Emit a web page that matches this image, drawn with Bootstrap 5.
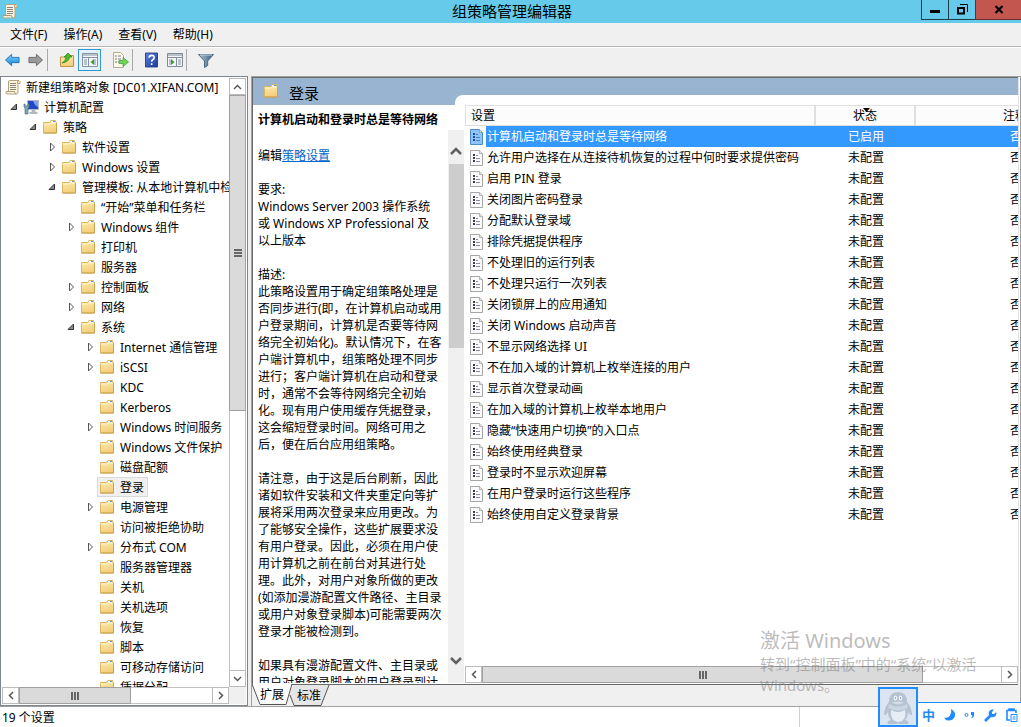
<!DOCTYPE html>
<html lang="zh-CN">
<head>
<meta charset="utf-8">
<meta name="viewport" content="width=device-width, initial-scale=1">
<title>组策略管理编辑器</title>
<link href="https://cdn.jsdelivr.net/npm/bootstrap@5.3.0/dist/css/bootstrap.min.css" rel="stylesheet">
<style>
  :root { --face: #f0f0f0; --edge: #a6a6a6; --sky: #66cbea; --band: #99b4d1; --ime: #1e8cff; }
  body { font: 12px/17px "Noto Sans", "Noto Sans CJK SC", sans-serif; color: #000; background: var(--face); }
  button { font: inherit; color: inherit; border: 0; background: none; padding: 0; }
  svg { display: block; flex: none; }

  .titlebar { height: 23px; background: var(--sky); }
  .titlebar h1 { font-size: 15px; line-height: 23px; padding-left: 3px; }
  .titlebar .app-icon { left: 2px; top: 3px; }
  .caption-btns { top: 0; right: 0; height: 20px; }
  .caption-btns button { width: 27px; height: 20px; border: 1px solid #1f3d47; border-top: 0; border-right: 0; display: grid; place-items: center; }
  .caption-btns .close-win { width: 46px; background: #c3564f; border-color: #6b2f2b; }

  .menubar { height: 24px; border-bottom: 1px solid #b5b5b5; padding-left: 10px; gap: 16px; }
  .toolbar { height: 29px; border-top: 1px solid #fff; padding-left: 1px; }
  .toolbar button { width: 23px; height: 22px; display: grid; place-items: center; }
  .toolbar .on { border: 1px solid #3097d6; background: #e4f1fa; }
  .toolbar .sep { width: 1px; height: 22px; background: #a9a9a9; margin-right: 7px; }

  .tree-pane { width: 248px; border: 1px solid #7f858f; background: #fff; padding: 1px 1px 1px 0; }
  #tree { margin-top: -1px; }
  .tree-foot { padding-left: 1px; }
  .sb-corner { width: 17px; background: var(--face); }
  .tree-row { height: 20px; white-space: nowrap; }
  .tree-row .twist { width: 14px; height: 20px; display: grid; place-items: center; }
  .tree-row .node { height: 20px; gap: 5px; padding: 0 3px 0 1px; border: 1px solid transparent; }
  .tree-row .node.sel { background: #f0f0f0; border-color: #d9d9d9; }

  .sb-v { width: 17px; background: #fff; border: 1px solid #c3c3c3; border-width: 0 1px; }
  .sb-h { height: 17px; background: #fff; border: 1px solid #c3c3c3; border-width: 1px 0; }
  .sb-btn { border: 1px solid #bcbcbc !important; display: grid; place-items: center; flex: none; }
  .sb-v .sb-btn { height: 17px; width: 17px; margin: 0 -1px; }
  .sb-h .sb-btn { width: 17px; height: 17px; margin: -1px 0; }
  .thumb { background: #dadada; border: 1px solid #a0a0a0; display: grid; place-items: center; }
  .sb-v .thumb { margin: 0 -1px; }
  .sb-h .thumb { margin: -1px 0; }
  .tree-v .thumb { height: 55%; }
  .tree-h .thumb { width: 58%; }
  .list-h .thumb { width: 85%; }

  .result-pane { margin-left: 3px; border: 1px solid #a0a0a0; border-bottom: 0; }
  .result-inner { border: 1px solid #696969; border-width: 1px 0 1px 1px; padding-bottom: 1px; background: #fff; }
  .frame-gap { width: 2px; border-left: 1px solid #e3e3e3; background: #fff; }
  .band { height: 27px; background: var(--band); padding: 0 0 2px 10px; gap: 10px; font-size: 15px; }
  .band h2 { font-size: 15px; line-height: 17px; margin: 5px 0 0; }
  .result-body, .list-pane { min-width: 0; min-height: 0; }
  .desc { width: 211px; }
  .desc h3 { font-size: 12px; line-height: 17px; height: 25px; padding: 6px 0 0 5px; font-weight: 700; white-space: nowrap; }
  .desc-text { padding: 17px 0 0 5px; white-space: nowrap; }
  .desc-text p { margin: 0 0 17px; }
  .desc-text a { color: #0066cc; }
  .desc-sb { width: 16px; background: var(--face); padding-left: 1px; }
  .desc-sb button { height: 34px; padding: 8px 0 0 1px; }
  .desc-sb .sb-end { padding: 0 0 10px 1px; }
  .desc-sb .bar { background: #cdcdcd; height: 38%; }

  .list-pane { margin-top: -10px; background: #fff; padding: 10px 0 0 1px; }
  .list-pane::before { content: ""; position: absolute; left: -9px; top: 0; width: 9px; height: 10px; background: #fff; border-top-left-radius: 8px; }
  .policies { table-layout: fixed; width: 651px; border-collapse: separate; border-spacing: 0; }
  .policies .c-ico { width: 21px; }
  .policies .c-name { width: 330px; }
  .policies .c-state { width: 100px; }
  .policies .c-note { width: 200px; }
  .policies th, .policies td { padding: 0; height: 21px; line-height: 19px; font-weight: 400; white-space: nowrap; text-align: center; }
  .policies th { background: #fcfcfc; border: 1px solid #e0e0e0; border-left: 0; border-right-width: 2px; position: relative; }
  .policies th:first-child { text-align: left; padding-left: 5px; border-left: 1px solid #e0e0e0; }
  .policies td.ico { padding-left: 5px; }
  .policies td.nm { text-align: left; padding-left: 1px; }
  .policies .sel td:not(.ico) { background: #3399ff; color: #fff; }
  .sort { left: 47px; top: 2px; }

  .tabs { height: 21px; }
  .tabs button { position: relative; height: 21px; }
  .tabs button svg { position: absolute; left: 0; top: 0; }
  .tabs button span { position: relative; }
  .tabs .t1 { width: 38px; padding-left: 2px; z-index: 1; margin-top: -1px; }
  .tabs .t2 { width: 40px; margin-left: -1px; }

  .status { height: 21px; border-top: 1px solid #a0a0a0; background: #fff; padding-left: 2px; }
  .status .part { width: 222px; border-left: 1px solid #d0d0d0; height: 20px; }

  .watermark { right: 36px; bottom: 31px; width: 225px; color: rgba(120,120,120,.5); font-size: 15px; line-height: 21px; pointer-events: none; }
  .watermark strong { font-size: 20px; line-height: 26px; font-weight: 400; display: block; }
  .ime { right: 0; bottom: 0; }
  .ime .penguin { width: 40px; height: 40px; border: 2px solid var(--ime); background: #dbe4f0; display: grid; place-items: center; }
  .ime .keys { width: 103px; height: 25px; border-top: 1px solid var(--ime); background: #fff; color: var(--ime); padding: 0 3px 0 4px; font-size: 13px; font-weight: 700; }
</style>
</head>
<body class="vh-100 overflow-hidden d-flex flex-column position-relative">

<svg width="0" height="0" class="position-absolute" aria-hidden="true">
  <defs>
    <linearGradient id="gold" x2="0.3" y2="1"><stop offset="0" stop-color="#ffeeb0"/><stop offset="1" stop-color="#f3cf7c"/></linearGradient>
    <linearGradient id="blueArrow" x2="0" y2="1"><stop offset="0" stop-color="#7fd3fb"/><stop offset="1" stop-color="#1385d8"/></linearGradient>
    <linearGradient id="help" x2="1" y2="1"><stop offset="0" stop-color="#5d84e0"/><stop offset="1" stop-color="#1b3796"/></linearGradient>
    <linearGradient id="steel" x2="1" y2="0"><stop offset="0" stop-color="#a9c2d4"/><stop offset=".5" stop-color="#7392ab"/><stop offset="1" stop-color="#3e566c"/></linearGradient>
    <symbol id="folder" viewBox="0 0 16 16">
      <path d="M1.500 3.500h6.500l1-2h4.500v2h1v10.500h-13z" fill="url(#gold)" stroke="#d9b463"/>
      <path d="M9 2h4v2H9z" fill="#fff"/><path d="M11 2h2v1h-2z" fill="#4d9be0"/>
      <path d="M1.500 5h6.500l1-1h5" fill="none" stroke="#fff3c9"/><path d="M1.500 14h13V4.500" fill="none" stroke="#c9a04c"/>
    </symbol>
    <symbol id="scroll" viewBox="0 0 16 16">
      <path d="M4.500 1.500h9.500q1.500.5 1 3h-2v8.500q0 2-2 2H2q-1.500-.5-1-2.500h2.500V3q0-1.500 1-1.500z" fill="#f9f3df" stroke="#b5a27a"/>
      <path d="M12.500 4.500V3q.5-1.500 1.500-1.500M1 12.500h8.500q0 2 1.500 2.500" fill="none" stroke="#b09c72"/>
      <path d="M5 4.500h6M5 6.500h6M5 8.500h6M5 10.500h6" stroke="#8d8778"/>
    </symbol>
    <symbol id="computer" viewBox="0 0 16 16">
      <path d="M4.500 1.500h11v9h-11z" fill="#2448c4" stroke="#b5bac5"/><path d="M10 2h5v6q-3-1-5-6z" fill="#78a4f3"/>
      <path d="M8.500 11h4v2h2v2h-8v-2h2z" fill="#b4b8be"/>
      <path d="M1 5v3l1 1v6h3V9l1-1V5H5v2H2V5z" fill="#7fa5b7" stroke="#4c7488" stroke-width=".7"/>
    </symbol>
    <symbol id="closed" viewBox="0 0 7 10"><path d="M1.500 1v8L5.500 5z" fill="#fff" stroke="#555"/></symbol>
    <symbol id="open" viewBox="0 0 8 8"><path d="M6.500 1v5.500H1z" fill="#888" stroke="#333"/></symbol>
    <symbol id="setting" viewBox="0 0 13 16">
      <path d="M.5.5h9l3 3v12H.5z" fill="#fafafa" stroke="#a6a6a6"/><path d="M9.500.5v3h3" fill="#e6e6e6" stroke="#b4b4b4"/>
      <path d="M3 4h2v2H3zM3 7h2v2H3zM3 10h2v2H3z" fill="#3c3c4c"/><path d="M6 5.500h2M6 8.500h4M6 11.500h4" stroke="#8c8ca2"/>
    </symbol>
    <symbol id="setting-sel" viewBox="0 0 13 16">
      <path d="M.5.5h9l3 3v12H.5z" fill="#8cc4fb" stroke="#4f8cc9"/><path d="M9.500.5v3h3" fill="#c9e8b0" stroke="#79a9c5"/>
      <path d="M3 4h2v2H3zM3 7h2v2H3zM3 10h2v2H3z" fill="#224d80"/><path d="M6 5.500h2M6 8.500h4M6 11.500h4" stroke="#437fc2"/>
    </symbol>
    <symbol id="up" viewBox="0 0 9 6"><path d="M1 5l3.500-3.500L8 5" fill="none" stroke="#555" stroke-width="1.400"/></symbol>
    <symbol id="down" viewBox="0 0 9 6"><path d="M1 1l3.500 3.500L8 1" fill="none" stroke="#555" stroke-width="1.400"/></symbol>
    <symbol id="left" viewBox="0 0 6 9"><path d="M5 1L1.500 4.500 5 8" fill="none" stroke="#555" stroke-width="1.500"/></symbol>
    <symbol id="right" viewBox="0 0 6 9"><path d="M1 1l3.500 3.500L1 8" fill="none" stroke="#555" stroke-width="1.500"/></symbol>
    <symbol id="grip" viewBox="0 0 8 8"><path d="M0 0h2v8H0zM3 0h2v8H3zM6 0h2v8H6z" fill="#666"/></symbol>
    <symbol id="grip-v" viewBox="0 0 8 8"><path d="M0 0v2h8V0zM0 3v2h8V3zM0 6v2h8V6z" fill="#666"/></symbol>
  </defs>
</svg>

<header class="titlebar position-relative flex-shrink-0">
  <svg class="app-icon position-absolute" width="16" height="16"><use href="#scroll"/></svg>
  <h1 class="text-center fw-normal m-0">组策略管理编辑器</h1>
  <div class="caption-btns position-absolute d-flex">
    <button type="button" aria-label="最小化"><svg width="10" height="10"><path d="M0 5h10v3H0z"/></svg></button>
    <button type="button" aria-label="还原"><svg width="11" height="11"><path d="M3 .5h7.500V8" fill="none" stroke="#000"/><path d="M1 4h6v5.500H1z" fill="none" stroke="#000" stroke-width="2"/></svg></button>
    <button type="button" class="close-win" aria-label="关闭"><svg width="10" height="9"><path d="M1.500 1l7 7M8.500 1l-7 7" stroke="#000" stroke-width="2.200"/></svg></button>
  </div>
</header>

<nav class="menubar d-flex align-items-center flex-shrink-0" aria-label="菜单">
  <button type="button">文件(F)</button>
  <button type="button">操作(A)</button>
  <button type="button">查看(V)</button>
  <button type="button">帮助(H)</button>
</nav>

<div class="toolbar d-flex align-items-center flex-shrink-0 pb-1" role="toolbar">
  <button type="button" aria-label="后退"><svg width="17" height="14" viewBox="0 0 18 16"><path d="M1 8l7-6.500V5h8.500v6H8v3.500z" fill="url(#blueArrow)" stroke="#1b6fae"/></svg></button>
  <button type="button" aria-label="前进"><svg width="17" height="14" viewBox="0 0 18 16"><path d="M17 8l-7-6.500V5H1.500v6H10v3.500z" fill="#9b9b9b" stroke="#626262"/></svg></button>
  <span class="sep"></span>
  <button type="button" aria-label="向上一级"><svg width="16" height="16" viewBox="0 0 16 16"><path d="M1.500 5h5l1-1.500h7v11h-13z" fill="url(#gold)" stroke="#bf943e"/><path d="M3 11q4-2 4-6H5l4-4 4 4h-2.500Q10 10 3 11z" fill="#48bd2c" stroke="#23801a" stroke-width=".7"/></svg></button>
  <button type="button" class="on" aria-label="显示/隐藏控制台树"><svg width="16" height="14" viewBox="0 0 16 14"><path d="M.5.5h15v13H.5z" fill="#f4f6f9" stroke="#8290a3"/><path d="M1 2h14M.5 4.500h15M6.500 5v8" stroke="#8290a3"/><path d="M2 7h3M2 9h3M2 11h3M13 6v6" stroke="#798da8"/><path d="M12 6v6L8.500 9z" fill="#32a12b"/></svg></button>
  <button type="button" class="ms-2" aria-label="导出列表"><svg width="17" height="16" viewBox="0 0 17 16"><path d="M1.500.5h7l3 3v12h-10z" fill="#fdf9e9" stroke="#b5ae94"/><path d="M3 4h2M3 7h2M3 10h2M6 4h3M6 7h3M6 10h3" stroke="#747b90"/><path d="M7 8.500h4V5.500L16.500 10 11 14.500v-3H7z" fill="#6fd653" stroke="#3a9e30" stroke-width=".7"/></svg></button>
  <span class="sep"></span>
  <button type="button" aria-label="帮助"><svg width="13" height="16" viewBox="0 0 14 16"><path d="M.5.500h13v15H.5z" fill="url(#help)" stroke="#20398a"/><path d="M4.500 5.500Q4.500 3 7.200 3t2.600 2.500Q9.800 7 8 8q-.8.500-.8 2M7.200 11.500v2" fill="none" stroke="#fff" stroke-width="1.700"/></svg></button>
  <button type="button" aria-label="显示/隐藏操作窗格"><svg width="16" height="14" viewBox="0 0 16 14"><path d="M.5.5h15v13H.5z" fill="#f4f6f9" stroke="#808a98"/><path d="M1 2h14M.5 4.500h15M9.500 5v8" stroke="#808a98"/><path d="M11 7h3M11 9h3M11 11h3M3 6v6" stroke="#8792a0"/><path d="M4 6v6l3.500-3z" fill="#32a12b"/></svg></button>
  <span class="sep"></span>
  <button type="button" aria-label="筛选器"><svg width="16" height="15" viewBox="0 0 16 15"><path d="M.5 1.500h15L9.700 8v4.500L6.500 14.500V8z" fill="url(#steel)" stroke="#4f697e"/><path d="M2 2h12" stroke="#c5d6e2"/></svg></button>
</div>

<main class="d-flex flex-grow-1 overflow-hidden">
  <section class="tree-pane d-flex flex-column flex-shrink-0" aria-label="控制台树">
    <div class="d-flex flex-grow-1 overflow-hidden">
      <div id="tree" class="flex-grow-1 overflow-hidden" role="tree"></div>
      <div class="sb-v tree-v d-flex flex-column flex-shrink-0">
        <button type="button" class="sb-btn" aria-label="向上滚动"><svg width="9" height="6"><use href="#up"/></svg></button>
        <div class="flex-grow-1"><div class="thumb"><svg width="8" height="8"><use href="#grip-v"/></svg></div></div>
        <button type="button" class="sb-btn" aria-label="向下滚动"><svg width="9" height="6"><use href="#down"/></svg></button>
      </div>
    </div>
    <div class="tree-foot d-flex flex-shrink-0">
      <div class="sb-h tree-h d-flex flex-grow-1">
        <button type="button" class="sb-btn" aria-label="向左滚动"><svg width="6" height="9"><use href="#left"/></svg></button>
        <div class="flex-grow-1 d-flex"><div class="thumb"><svg width="8" height="8"><use href="#grip"/></svg></div></div>
        <button type="button" class="sb-btn" aria-label="向右滚动"><svg width="6" height="9"><use href="#right"/></svg></button>
      </div>
      <div class="sb-corner"></div>
    </div>
  </section>

  <section class="result-pane d-flex flex-column flex-grow-1 overflow-hidden">
    <div class="d-flex flex-grow-1 overflow-hidden">
      <div class="result-inner d-flex flex-column flex-grow-1 overflow-hidden">
        <div class="band d-flex align-items-center flex-shrink-0">
          <svg width="16" height="16"><use href="#folder"/></svg><h2 class="fw-normal">登录</h2>
        </div>
        <div class="result-body d-flex flex-grow-1">
          <div class="desc d-flex flex-column flex-shrink-0">
            <h3 class="m-0 flex-shrink-0">计算机启动和登录时总是等待网络</h3>
            <div class="d-flex flex-grow-1 overflow-hidden">
              <div class="desc-text flex-grow-1 overflow-hidden">
                <p>编辑<a href="#">策略设置</a></p>
                <p>要求:<br>Windows Server 2003 操作系统<br>或 Windows XP Professional 及<br>以上版本</p>
                <p>描述:<br>此策略设置用于确定组策略处理是<br>否同步进行(即，在计算机启动或用<br>户登录期间，计算机是否要等待网<br>络完全初始化)。默认情况下，在客<br>户端计算机中，组策略处理不同步<br>进行；客户端计算机在启动和登录<br>时，通常不会等待网络完全初始<br>化。现有用户使用缓存凭据登录，<br>这会缩短登录时间。网络可用之<br>后，便在后台应用组策略。</p>
                <p>请注意，由于这是后台刷新，因此<br>诸如软件安装和文件夹重定向等扩<br>展将采用两次登录来应用更改。为<br>了能够安全操作，这些扩展要求没<br>有用户登录。因此，必须在用户使<br>用计算机之前在前台对其进行处<br>理。此外，对用户对象所做的更改<br>(如添加漫游配置文件路径、主目录<br>或用户对象登录脚本)可能需要两次<br>登录才能被检测到。</p>
                <p>如果具有漫游配置文件、主目录或<br>用户对象登录脚本的用户登录到计</p>
              </div>
              <div class="desc-sb d-flex flex-column flex-shrink-0">
                <button type="button" aria-label="向上滚动"><svg width="12" height="8"><path d="M1 7l5-5 5 5" fill="none" stroke="#606060" stroke-width="2.500"/></svg></button>
                <div class="flex-grow-1"><div class="bar"></div></div>
                <button type="button" class="sb-end" aria-label="向下滚动"><svg width="12" height="8"><path d="M1 1l5 5 5-5" fill="none" stroke="#606060" stroke-width="2.500"/></svg></button>
              </div>
            </div>
          </div>

          <div class="list-pane position-relative d-flex flex-column flex-grow-1">
            <div class="flex-grow-1 overflow-hidden">
              <table class="policies">
                <colgroup><col class="c-ico"><col class="c-name"><col class="c-state"><col class="c-note"></colgroup>
                <thead><tr>
                  <th colspan="2">设置</th>
                  <th>状态<svg class="sort position-absolute" width="7" height="4"><path d="M0 0h7L3.500 4z"/></svg></th>
                  <th>注释</th>
                </tr></thead>
                <tbody id="rows"></tbody>
              </table>
            </div>
            <div class="sb-h list-h d-flex flex-shrink-0">
              <button type="button" class="sb-btn" aria-label="向左滚动"><svg width="6" height="9"><use href="#left"/></svg></button>
              <div class="flex-grow-1 d-flex"><div class="thumb"><svg width="8" height="8"><use href="#grip"/></svg></div></div>
              <button type="button" class="sb-btn" aria-label="向右滚动"><svg width="6" height="9"><use href="#right"/></svg></button>
            </div>
          </div>
        </div>
      </div>
      <div class="frame-gap flex-shrink-0"></div>
    </div>
    <div class="tabs d-flex flex-shrink-0" role="tablist">
      <button type="button" class="t1" role="tab" aria-selected="true"><svg width="41" height="21"><path d="M0 0l8 20.500h26L40 0z" fill="#fff"/><path d="M0 0l8 20.500h26L40 0" fill="none" stroke="#555"/></svg><span>扩展</span></button>
      <button type="button" class="t2" role="tab" aria-selected="false"><svg width="41" height="21"><path d="M4 0L1 10l4 10.500h27L40 0z" fill="#e6e6e6"/><path d="M1 10l4 10.500h27L40 0" fill="none" stroke="#555"/></svg><span>标准</span></button>
    </div>
  </section>
</main>

<footer class="status d-flex align-items-center justify-content-between flex-shrink-0">
  <span>19 个设置</span><span class="part"></span>
</footer>

<div class="watermark position-absolute"><strong>激活 Windows</strong>转到“控制面板”中的“系统”以激活 Windows。</div>

<div class="ime position-absolute d-flex align-items-end">
  <div class="penguin"><svg width="32" height="35" viewBox="0 0 32 35">
    <path d="M16 2q-9 0-9 10Q2 18 2 25q3 0 4-3 0 5 3 8-5 1-3 4h9l1-1 1 1h9q2-3-3-4 3-3 3-8 1 3 4 3 0-7-5-13Q25 2 16 2z" fill="#b4c2d1"/>
    <path d="M9 20q7 4 14 0 2 11-7 12-8-1-7-12z" fill="#e6edf5"/><path d="M7 14q9 5 18 0l1 4q-9 5-20 0z" fill="#c9d5e1"/>
    <ellipse cx="13.500" cy="8" rx="1.800" ry="2.600" fill="#eef3f9"/><ellipse cx="18.500" cy="8" rx="1.800" ry="2.600" fill="#eef3f9"/><path d="M10 12.500q6-2 12 0-6 4-12 0z" fill="#d3dde7"/><path d="M13.500 7v2M18.500 7v2" stroke="#9eacbc"/></svg></div>
  <div class="keys d-flex align-items-center justify-content-between">
    <span>中</span>
    <svg width="12" height="12"><path d="M7 0q5 3 4 7-2 5-7 4.500Q1 11 0 8.500q4 1 6-2T7 0z" fill="#1e8cff"/></svg>
    <svg width="11" height="8"><circle cx="2.500" cy="4" r="1.500" fill="none" stroke="#1e8cff"/><path d="M7 1h3v3q0 3-3 3 2-1 1-3H7z" fill="#1e8cff"/></svg>
    <svg width="13" height="13"><path d="M0 11l5-5Q4 3 6 1.500 8 0 10 .8L8 3v2h2l2.300-2Q13 5 11.500 7 9.500 8.800 7 8l-5 5z" fill="#1e8cff"/></svg>
    <svg width="12" height="14"><path d="M4 12H1V2.500h9V5M3 2V1h5v1" fill="none" stroke="#1e8cff" stroke-width="1.600"/><path d="M5 6.500h6v7H5zM6.500 9h3M6.500 11h3" fill="none" stroke="#1e8cff"/></svg>
  </div>
</div>

<script>
  // [level, expander state, icon, label, selected]
  const nodes = [
    [0, '', 'scroll', '新建组策略对象 [DC01.XIFAN.COM]'],
    [1, 'open', 'computer', '计算机配置'],
    [2, 'open', 'folder', '策略'],
    [3, 'closed', 'folder', '软件设置'],
    [3, 'closed', 'folder', 'Windows 设置'],
    [3, 'open', 'folder', '管理模板: 从本地计算机中检'],
    [4, '', 'folder', '“开始”菜单和任务栏'],
    [4, 'closed', 'folder', 'Windows 组件'],
    [4, '', 'folder', '打印机'],
    [4, '', 'folder', '服务器'],
    [4, 'closed', 'folder', '控制面板'],
    [4, 'closed', 'folder', '网络'],
    [4, 'open', 'folder', '系统'],
    [5, 'closed', 'folder', 'Internet 通信管理'],
    [5, 'closed', 'folder', 'iSCSI'],
    [5, '', 'folder', 'KDC'],
    [5, '', 'folder', 'Kerberos'],
    [5, 'closed', 'folder', 'Windows 时间服务'],
    [5, '', 'folder', 'Windows 文件保护'],
    [5, '', 'folder', '磁盘配额'],
    [5, '', 'folder', '登录', true],
    [5, 'closed', 'folder', '电源管理'],
    [5, '', 'folder', '访问被拒绝协助'],
    [5, 'closed', 'folder', '分布式 COM'],
    [5, '', 'folder', '服务器管理器'],
    [5, '', 'folder', '关机'],
    [5, '', 'folder', '关机选项'],
    [5, '', 'folder', '恢复'],
    [5, '', 'folder', '脚本'],
    [5, '', 'folder', '可移动存储访问'],
    [5, '', 'folder', '凭据分配']
  ];
  document.getElementById('tree').innerHTML = nodes.map(([lv, st, ic, text, sel]) => {
    const twist = lv === 0 ? '' : st
      ? `<button type="button" class="twist flex-shrink-0" aria-label="展开或折叠"><svg width="${st === 'open' ? 8 : 7}" height="${st === 'open' ? 8 : 10}"><use href="#${st}"/></svg></button>`
      : '<span class="twist flex-shrink-0"></span>';
    const pad = lv === 0 ? 2 : 19 * lv - 13;
    return `<div class="tree-row d-flex align-items-center" role="treeitem" aria-level="${lv + 1}" style="padding-left:${pad}px">${twist}<span class="node d-flex align-items-center${sel ? ' sel' : ''}"><svg width="16" height="16"><use href="#${ic}"/></svg>${text}</span></div>`;
  }).join('');

  const policies = ['计算机启动和登录时总是等待网络', '允许用户选择在从连接待机恢复的过程中何时要求提供密码', '启用 PIN 登录', '关闭图片密码登录', '分配默认登录域', '排除凭据提供程序', '不处理旧的运行列表', '不处理只运行一次列表', '关闭锁屏上的应用通知', '关闭 Windows 启动声音', '不显示网络选择 UI', '不在加入域的计算机上枚举连接的用户', '显示首次登录动画', '在加入域的计算机上枚举本地用户', '隐藏“快速用户切换”的入口点', '始终使用经典登录', '登录时不显示欢迎屏幕', '在用户登录时运行这些程序', '始终使用自定义登录背景'];
  document.getElementById('rows').innerHTML = policies.map((p, i) =>
    `<tr class="${i ? '' : 'sel'}"><td class="ico"><svg width="13" height="16"><use href="#setting${i ? '' : '-sel'}"/></svg></td><td class="nm">${p}</td><td>${i ? '未配置' : '已启用'}</td><td>否</td></tr>`).join('');
</script>
<script src="https://cdn.jsdelivr.net/npm/bootstrap@5.3.0/dist/js/bootstrap.bundle.min.js"></script>
</body>
</html>
